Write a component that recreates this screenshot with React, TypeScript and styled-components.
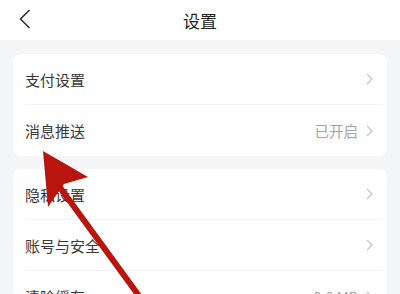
import { createGlobalStyle, styled } from "styled-components";

const Global = createGlobalStyle`
  html, body {
    margin: 0;
    padding: 0;
    background: #f3f5f6;
    font-family: "Noto Sans CJK SC", "Noto Sans", sans-serif;
  }
`;

const Page = styled.div`
  position: relative;
  width: 400px;
  height: 294px;
  overflow: hidden;
  background: #f3f5f6;
`;

const Header = styled.div`
  height: 40px;
  background: #ffffff;
  display: flex;
  align-items: center;
  justify-content: center;
  position: relative;
`;

const Back = styled.div`
  position: absolute;
  left: 19px;
  top: 9px;
  width: 12px;
  height: 20px;
  display: flex;
`;

const Title = styled.span`
  font-size: 17px;
  color: #222;
  line-height: 1;
`;

const Body = styled.div`
  padding: 14px 13px 0 13px;
  display: flex;
  flex-direction: column;
  gap: 13px;
`;

const Card = styled.div`
  background: #ffffff;
  border-radius: 8px;
  display: flex;
  flex-direction: column;
`;

const Row = styled.div<{ $last?: boolean }>`
  height: 51px;
  margin: 0 4px 0 12px;
  display: flex;
  align-items: center;
  box-sizing: border-box;
  border-bottom: ${(p) => (p.$last ? "none" : "1px solid #f1f2f3")};
`;

const Label = styled.span`
  flex: 1;
  font-size: 15px;
  color: #383838;
`;

const Value = styled.span`
  font-size: 14.5px;
  color: #a3a3a3;
  margin-right: 8px;
`;

const Chevron = styled.svg`
  width: 7px;
  height: 12px;
  margin-right: 10px;
`;

const Arrow = styled.svg`
  position: absolute;
  left: 0;
  top: 0;
  pointer-events: none;
`;

type Item = { label: string; value?: string };

const groups: Item[][] = [
  [{ label: "支付设置" }, { label: "消息推送", value: "已开启" }],
  [
    { label: "隐私设置" },
    { label: "账号与安全" },
    { label: "清除缓存", value: "0.0 MB" },
  ],
];

export default function App() {
  return (
    <Page>
      <Global />
      <Header>
        <Back>
          <svg width="12" height="20" viewBox="0 0 12 20">
            <path d="M10.5 1 L1.5 10 L10.5 19" fill="none" stroke="#333" strokeWidth="1.6" />
          </svg>
        </Back>
        <Title>设置</Title>
      </Header>
      <Body>
        {groups.map((items, gi) => (
          <Card key={gi}>
            {items.map((it, i) => (
              <Row key={it.label} $last={i === items.length - 1}>
                <Label>{it.label}</Label>
                {it.value && <Value>{it.value}</Value>}
                <Chevron viewBox="0 0 7 12">
                  <path d="M1 1 L6 6 L1 11" fill="none" stroke="#c4c4c4" strokeWidth="1.2" />
                </Chevron>
              </Row>
            ))}
          </Card>
        ))}
      </Body>
      <Arrow width="400" height="294" viewBox="0 0 400 294">
        <line x1="56" y1="182" x2="142" y2="300" stroke="#b8150f" strokeWidth="6" />
        <polygon points="43,151 88,177 64,184 48,207" fill="#b8150f" />
      </Arrow>
    </Page>
  );
}
